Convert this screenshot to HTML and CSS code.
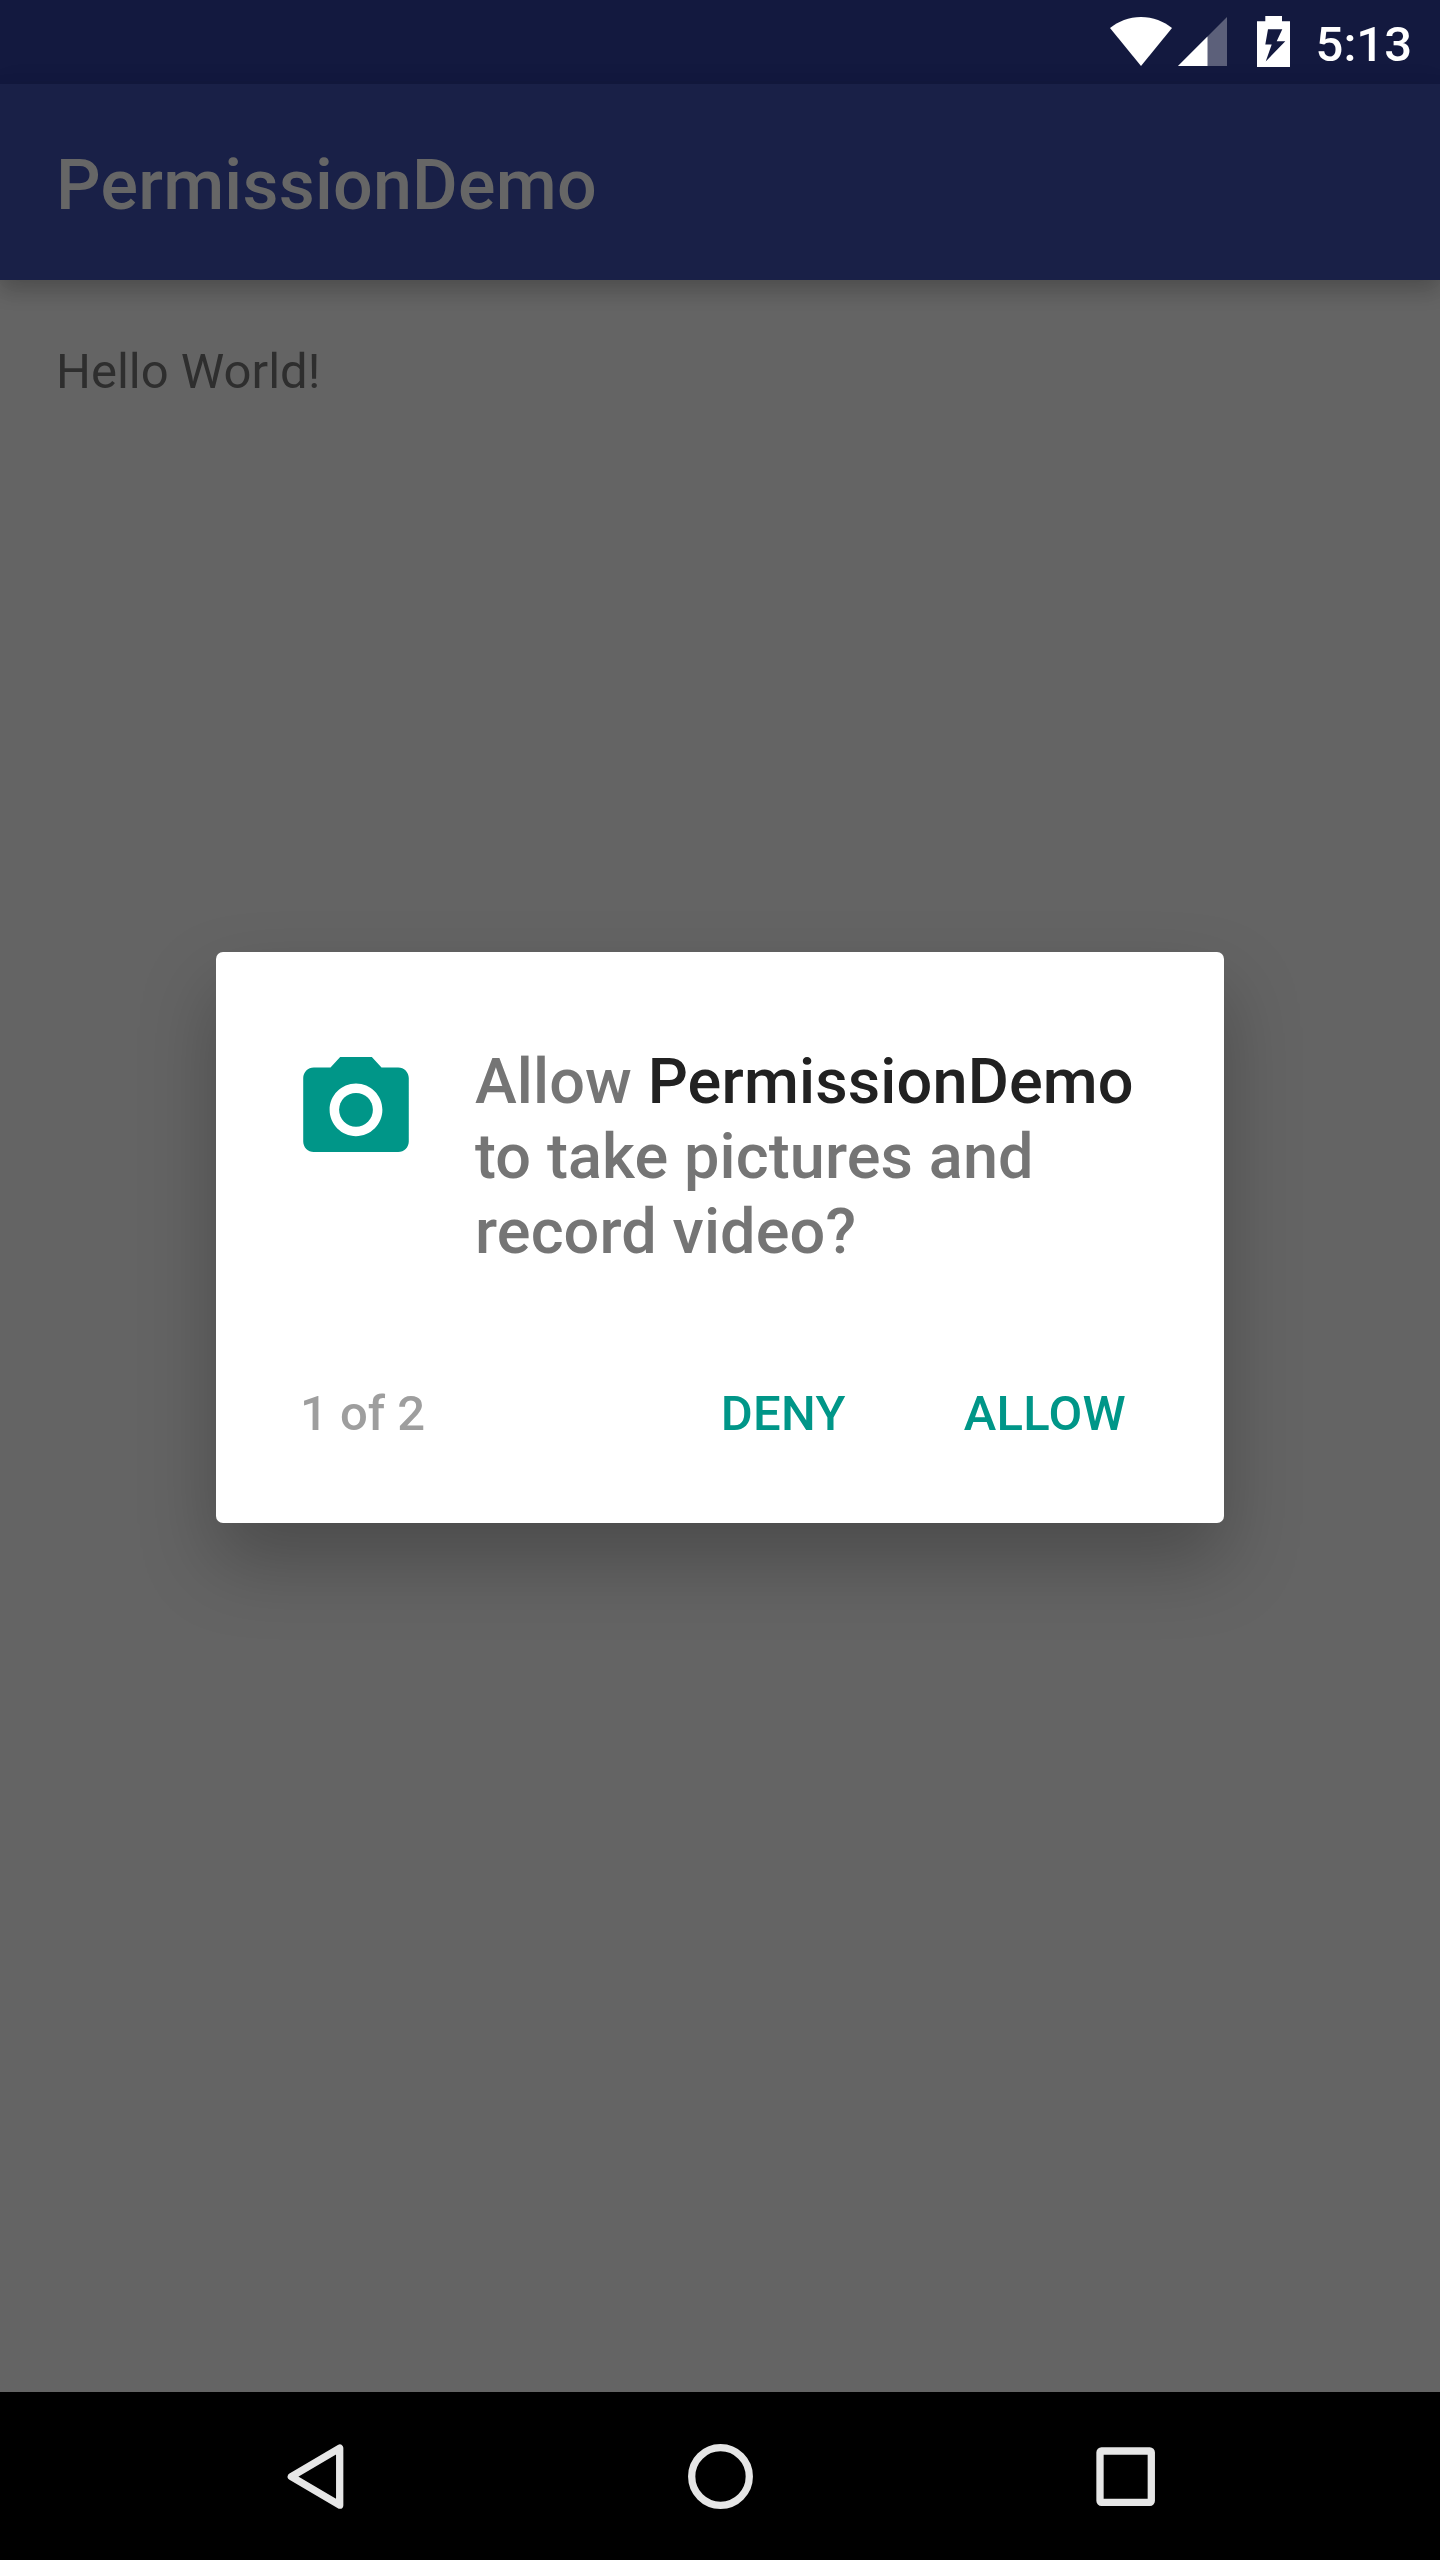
FILE: index.html
```html
<!DOCTYPE html>
<html lang="en">
<head>
<meta charset="utf-8">
<title>PermissionDemo</title>
<link rel="stylesheet" href="styles.css">
</head>
<body>
<div class="screen">
  <header class="status-bar">
    <svg class="status-wifi" viewBox="0 0 62 49"><path d="M0 11C8 4.500 19 0 31 0S54 4.500 62 11L31 49Z" fill="#fff"/></svg>
    <svg class="status-signal" viewBox="0 0 49 49"><path d="M0 49 49 0V49Z" fill="#fff" fill-opacity=".31"/><path d="M0 49 29.500 19.500V49Z" fill="#fff"/></svg>
    <svg class="status-battery" viewBox="0 0 33 51"><path fill="#fff" fill-rule="evenodd" d="M8.300 0H25V5.200H33V51H0V5.200H8.300ZM11 13.300 8.300 28.600H14.700L8.700 45.500 28.300 25.200H19.700L25.300 13.300Z"/></svg>
    <span class="clock">5:13</span>
  </header>
  <div class="app-bar"><h1 class="app-title">PermissionDemo</h1></div>
  <main class="content">
    <p class="greeting">Hello World!</p>
    <section class="dialog" role="dialog">
      <div class="message-row">
        <svg class="camera" viewBox="2 2 20 18"><circle cx="12" cy="12" r="3.200"/><path d="M9 2 7.170 4H4c-1.100 0-2 .9-2 2v12c0 1.100.9 2 2 2h16c1.100 0 2-.9 2-2V6c0-1.100-.9-2-2-2h-3.170L15 2H9zm3 15c-2.760 0-5-2.240-5-5s2.240-5 5-5 5 2.240 5 5-2.240 5-5 5z"/></svg>
        <p class="message">Allow <strong class="app-name">PermissionDemo</strong> to take pictures and record video?</p>
      </div>
      <div class="actions">
        <span class="progress">1 of 2</span>
        <button class="action">DENY</button>
        <button class="action">ALLOW</button>
      </div>
    </section>
  </main>
  <nav class="nav-bar">
    <svg class="nav-icon" viewBox="0 0 70 70"><path d="M10.300 35.600 58.700 7.200V64.200Z"/></svg>
    <svg class="nav-icon" viewBox="0 0 70 70"><circle cx="34.500" cy="35.500" r="28.800"/></svg>
    <svg class="nav-icon" viewBox="0 0 70 70"><rect x="9" y="10" width="51.300" height="51.300" rx="1.500"/></svg>
  </nav>
</div>
</body>
</html>
```
FILE: styles.css
```css
* { box-sizing: border-box; }
body { margin: 0; font-family: Roboto, sans-serif; }
.screen {
  width: 1440px;
  height: 2560px;
  display: flex;
  flex-direction: column;
  background: #646464;
  overflow: hidden;
}
.status-bar {
  height: 84px;
  flex: none;
  display: flex;
  align-items: flex-start;
  justify-content: flex-end;
  padding: 16px 28px 0 0;
  background: #13193f;
}
.status-wifi { width: 62px; height: 49px; margin: 1px 6px 0 0; }
.status-signal { width: 49px; height: 49px; margin: 1px 30px 0 0; }
.status-battery { width: 33px; height: 51px; margin-right: 26px; }
.clock { font-size: 49px; line-height: 58px; font-weight: 500; color: #fff; }
.app-bar {
  height: 196px;
  flex: none;
  display: flex;
  align-items: center;
  padding: 6px 56px 0;
  background: #192047;
  box-shadow: 0 10px 20px rgba(0, 0, 0, .2), 0 2px 30px rgba(0, 0, 0, .05);
}
.app-title { margin: 0; font-size: 70px; line-height: 82px; font-weight: 500; letter-spacing: .22px; color: #666; }
.content {
  flex: 1;
  display: flex;
  flex-direction: column;
  padding: 63px 56px 0;
}
.greeting { margin: 0; font-size: 49px; line-height: 58px; color: #2e2e2e; }
.dialog {
  width: 1008px;
  height: 571px;
  margin: 551px auto 0;
  padding: 92px 84px 0;
  background: #fff;
  border-radius: 7px;
  box-shadow: 0 38px 76px rgba(0, 0, 0, .25);
}
.message-row { display: flex; align-items: flex-start; }
.camera { width: 106px; height: 95px; flex: none; margin: 13px 0 0 3px; fill: #009688; }
.message {
  width: 670px;
  margin: 0 -40px 0 66px;
  font-size: 63px;
  line-height: 75px;
  font-weight: 500;
  letter-spacing: .1px;
  color: #757575;
}
.app-name { font-weight: 500; letter-spacing: .15px; color: #212121; }
.actions { display: flex; align-items: center; margin-top: 116px; height: 58px; }
.progress { flex: 1; font-size: 49px; line-height: 58px; font-weight: 500; color: #9e9e9e; }
.action {
  margin: 0 14px 0 104px;
  padding: 0;
  border: 0;
  background: none;
  font: 500 49px/58px Roboto, sans-serif;
  letter-spacing: .3px;
  color: #009688;
}
.nav-bar {
  height: 168px;
  flex: none;
  display: flex;
  align-items: center;
  justify-content: space-between;
  padding: 0 279px 0 281px;
  background: #000;
}
.nav-icon { width: 70px; height: 70px; fill: none; stroke: #e6e6e6; stroke-width: 7.300; stroke-linejoin: round; }
```
